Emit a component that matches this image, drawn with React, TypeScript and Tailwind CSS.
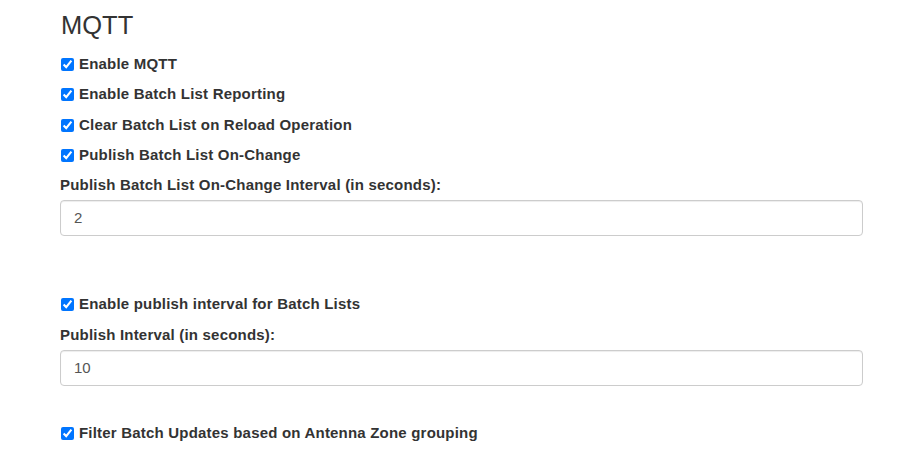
import React from "react";

function CheckRow({ label, className = "" }: { label: string; className?: string }) {
  return (
    <label className={`flex h-[20px] items-center gap-[5px] pl-[1px] font-bold tracking-[0.2px] ${className}`}>
      <input type="checkbox" defaultChecked className="m-0 h-[13px] w-[13px]" />
      <span>{label}</span>
    </label>
  );
}

function NumberField({ label, value, className = "" }: { label: string; value: string; className?: string }) {
  return (
    <div className={className}>
      <div className="h-[20px] leading-[20px] font-bold tracking-[0.2px]">{label}</div>
      <input
        type="text"
        defaultValue={value}
        className="mt-[5px] block h-[36px] w-[803px] rounded-[4px] border border-[#ccc] px-[13px] text-[15px] text-[#555] shadow-[inset_0_1px_1px_rgba(0,0,0,0.075)] outline-none"
      />
    </div>
  );
}

export default function App() {
  return (
    <div
      className="min-h-[472px] bg-white pl-[60px] pt-[12px] text-[15px] text-[#333]"
      style={{ fontFamily: '"Liberation Sans", Arial, Helvetica, sans-serif' }}
    >
      <h3 className="text-[25.5px] leading-[27px] font-normal pl-[1px]">MQTT</h3>

      <div className="mt-[15px] flex flex-col gap-[10.5px]">
        <CheckRow label="Enable MQTT" />
        <CheckRow label="Enable Batch List Reporting" />
        <CheckRow label="Clear Batch List on Reload Operation" />
        <CheckRow label="Publish Batch List On-Change" />
      </div>

      <NumberField
        className="mt-[9px]"
        label="Publish Batch List On-Change Interval (in seconds):"
        value="2"
      />

      <CheckRow className="mt-[59px]" label="Enable publish interval for Batch Lists" />

      <NumberField className="mt-[10px]" label="Publish Interval (in seconds):" value="10" />

      <CheckRow className="mt-[38px]" label="Filter Batch Updates based on Antenna Zone grouping" />
    </div>
  );
}
